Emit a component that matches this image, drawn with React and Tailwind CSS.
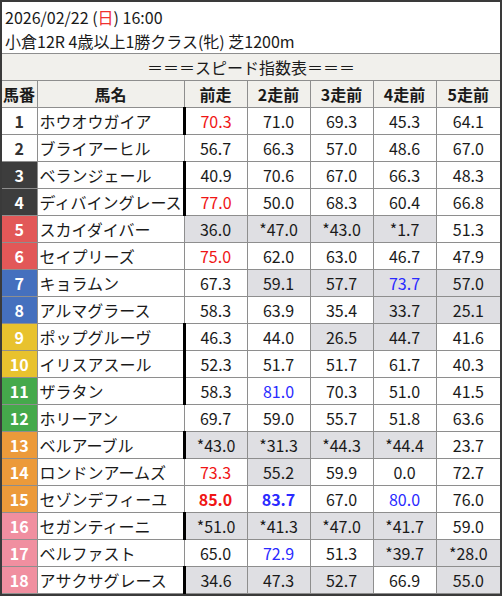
import React from 'react'

const rows = [
  [1, 'ホウオウガイア', ['70.3', '71.0', '69.3', '45.3', '64.1']],
  [2, 'ブライアーヒル', ['56.7', '66.3', '57.0', '48.6', '67.0']],
  [3, 'ベランジェール', ['40.9', '70.6', '67.0', '66.3', '48.3']],
  [4, 'ディバイングレース', ['77.0', '50.0', '68.3', '60.4', '66.8']],
  [5, 'スカイダイバー', ['36.0', '*47.0', '*43.0', '*1.7', '51.3']],
  [6, 'セイプリーズ', ['75.0', '62.0', '63.0', '46.7', '47.9']],
  [7, 'キョラムン', ['67.3', '59.1', '57.7', '73.7', '57.0']],
  [8, 'アルマグラース', ['58.3', '63.9', '35.4', '33.7', '25.1']],
  [9, 'ポップグルーヴ', ['46.3', '44.0', '26.5', '44.7', '41.6']],
  [10, 'イリスアスール', ['52.3', '51.7', '51.7', '61.7', '40.3']],
  [11, 'ザラタン', ['58.3', '81.0', '70.3', '51.0', '41.5']],
  [12, 'ホリーアン', ['69.7', '59.0', '55.7', '51.8', '63.6']],
  [13, 'ベルアーブル', ['*43.0', '*31.3', '*44.3', '*44.4', '23.7']],
  [14, 'ロンドンアームズ', ['73.3', '55.2', '59.9', '0.0', '72.7']],
  [15, 'セゾンデフィーユ', ['85.0', '83.7', '67.0', '80.0', '76.0']],
  [16, 'セガンティーニ', ['*51.0', '*41.3', '*47.0', '*41.7', '59.0']],
  [17, 'ベルファスト', ['65.0', '72.9', '51.3', '*39.7', '*28.0']],
  [18, 'アサクサグレース', ['34.6', '47.3', '52.7', '66.9', '55.0']],
]

// gray cells per horse: index of column (0 = 前走)
const gray = {
  5: [0, 1, 2, 3],
  7: [1, 2, 3, 4],
  8: [3, 4],
  9: [2, 3],
  13: [0, 1, 2, 3],
  14: [1],
  16: [0, 1, 2, 3],
  17: [3, 4],
  18: [0, 1, 2, 4],
}

// text colour: r = red, b = blue, R/B = bold
const marks = {
  '1-0': 'r', '4-0': 'r', '6-0': 'r', '14-0': 'r', '15-0': 'R',
  '7-3': 'b', '11-1': 'b', '15-1': 'B', '15-3': 'b', '17-1': 'b',
}

const barRows = [1, 3, 4, 9, 10, 11, 13, 16, 18]

function frameClass(n) {
  if (n <= 2) return 'bg-white text-[#333]'
  if (n <= 4) return 'bg-[#3d3d3d] text-white'
  if (n <= 6) return 'bg-[#e25858] text-white'
  if (n <= 8) return 'bg-[#4570be] text-white'
  if (n <= 10) return 'bg-[#e8c22e] text-white'
  if (n <= 12) return 'bg-[#45a94b] text-white'
  if (n <= 15) return 'bg-[#ec9a3a] text-white'
  return 'bg-[#f08fa0] text-white'
}

function markClass(m) {
  if (m === 'r') return 'text-[#f01515]'
  if (m === 'R') return 'text-[#f01515] font-bold'
  if (m === 'b') return 'text-[#2a2aff]'
  if (m === 'B') return 'text-[#2a2aff] font-bold'
  return 'text-[#1a1a1a]'
}

const heads = ['前走', '2走前', '3走前', '4走前', '5走前']

export default function App() {
  return (
    <div
      className="w-[502px] h-[596px] border-2 border-[#3a3a3a] bg-white overflow-hidden text-[#1a1a1a]"
      style={{ fontFamily: '"Noto Sans CJK JP", "Noto Sans", sans-serif' }}
    >
      <div className="pl-[3px] pt-[3px] text-[16px] leading-[24px]">
        <div>2026/02/22 (<span className="text-[#f03030]">日</span>) 16:00</div>
        <div>小倉12R 4歳以上1勝クラス(牝) 芝1200m</div>
      </div>
      <table className="w-[498px] table-fixed border-collapse text-[16px]">
        <colgroup>
          <col className="w-[35px]" />
          <col className="w-[147px]" />
          <col className="w-[63px]" />
          <col className="w-[63px]" />
          <col className="w-[63px]" />
          <col className="w-[63px]" />
          <col className="w-[64px]" />
        </colgroup>
        <thead>
          <tr className="h-[27px] bg-[#f1f0ec]">
            <td colSpan={7} className="border-t border-[#8e8e8e] text-center leading-[26px] p-0">
              ＝＝＝スピード指数表＝＝＝
            </td>
          </tr>
          <tr className="h-[27px] bg-[#f1f0ec] font-bold">
            <th className="border border-l-0 border-[#8e8e8e] p-0 leading-[26px] text-left pl-[1px]">馬番</th>
            <th className="border border-[#8e8e8e] p-0 leading-[26px]">馬名</th>
            {heads.map((h, i) => (
              <th key={h} className={'border border-[#8e8e8e] p-0 leading-[26px]' + (i === 4 ? ' border-r-0' : '')}>
                {h}
              </th>
            ))}
          </tr>
        </thead>
        <tbody>
          {rows.map(([n, name, vals]) => (
            <tr key={n} className="h-[27px]">
              <td className={'border border-l-0 border-[#8e8e8e] p-0 text-center font-bold leading-[26px] ' + frameClass(n)}>
                {n}
              </td>
              <td className="border border-[#8e8e8e] p-0 pl-[2px] leading-[26px] whitespace-nowrap overflow-hidden">
                {name}
              </td>
              {vals.map((v, i) => {
                const g = (gray[n] || []).includes(i)
                const bar = i === 0 && barRows.includes(n)
                return (
                  <td
                    key={i}
                    className={
                      'border border-[#8e8e8e] p-0 text-center leading-[26px] ' +
                      (g ? 'bg-[#dfdfe3] ' : 'bg-white ') +
                      (bar ? 'border-l-[3px] border-l-black ' : '') +
                      (i === 4 ? 'border-r-0 ' : '') +
                      markClass(marks[n + '-' + i])
                    }
                  >
                    {v}
                  </td>
                )
              })}
            </tr>
          ))}
        </tbody>
      </table>
    </div>
  )
}
